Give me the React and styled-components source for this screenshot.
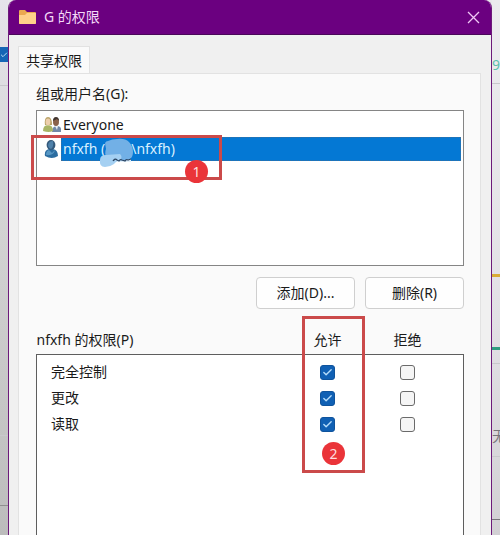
import React, { useState } from "react"
import styled, { createGlobalStyle } from "styled-components"
import { Check } from "lucide-react"

const GlobalStyle = createGlobalStyle`
  *, *::before, *::after {
    box-sizing: border-box;
  }
  body {
    margin: 0;
    overflow: hidden;
    background: #e9e8ec;
    color: #1a1a1a;
    font-family: "Noto Sans", "Noto Sans CJK SC", sans-serif;
    font-size: 14px;
    line-height: 20px;
  }
`

const Desktop = styled.div`
  display: grid;
  grid-template-columns: 8px minmax(0, 1fr) 8px;
  height: 100vh;
`

const Strip = styled.div`
  display: flex;
  flex-direction: column;
  overflow: hidden;
  white-space: nowrap;
  background: ${props => props.$background};
`

const Gap = styled.div`
  flex: 0 0 ${props => props.$size}px;
`

const Rule = styled.div`
  flex: 0 0 ${props => props.$weight || 1}px;
  background: ${props => props.$color || "#c9c8cc"};
`

const StripText = styled.span`
  flex: 0 0 20px;
  display: flex;
  color: ${props => props.$color};
`

const StripTick = styled.div`
  flex: 0 0 15px;
  display: flex;
  justify-content: flex-end;
  align-items: center;
  color: #b9dcf5;
  background: #1565b5;
`

const Window = styled.main`
  display: flex;
  flex-direction: column;
  min-width: 0;
  overflow: hidden;
  border: 1px solid #6d1a7a;
  border-top: none;
  border-bottom: none;
  border-radius: 8px 8px 0 0;
  background: #f0f0f0;
`

const TitleBar = styled.header`
  display: flex;
  flex: 0 0 35px;
  align-items: center;
  gap: 8px;
  padding: 0 11px 0 10px;
  color: #f3d9f7;
  background: #6b0080;
  border-bottom: 1px solid #4a0759;
`

const Title = styled.h1`
  flex: 1;
  margin: 0;
  font-size: 14px;
  font-weight: 400;
  line-height: 20px;
`

const CloseButton = styled.button`
  display: flex;
  padding: 0;
  border: none;
  color: #f0c8f5;
  background: none;
`

const Body = styled.div`
  display: flex;
  flex: 1;
  flex-direction: column;
  padding: 11px 10px 0 9px;
`

const Tabs = styled.div`
  display: flex;
`

const Tab = styled.button`
  height: 28px;
  margin-bottom: -1px;
  padding: 0 7px;
  border: 1px solid #e2e2e2;
  border-bottom: none;
  color: inherit;
  background: #fafafa;
  font: inherit;
`

const Panel = styled.section`
  flex: 1;
  padding: 10px 16px 0 17px;
  border: 1px solid #e2e2e2;
  border-bottom: none;
  background: #fafafa;
`

const ListLabel = styled.div`
  margin-bottom: 6px;
`

const ListArea = styled.div`
  position: relative;
`

const UserList = styled.ul`
  height: 156px;
  margin: 0;
  padding: 2px;
  border: 1px solid #858585;
  background: #fff;
  list-style: none;
`

const UserItem = styled.li`
  display: flex;
  height: 24px;
  padding-left: 4px;
`

const UserIcon = styled.span`
  display: flex;
  flex: 0 0 18px;
  align-items: center;
`

const UserName = styled.span`
  display: flex;
  flex: 1;
  align-items: center;
  padding-left: 2px;
  color: ${props => (props.$selected ? "#d9f1ff" : "inherit")};
  background: ${props => (props.$selected ? "#0478d4" : "none")};
  outline: ${props => (props.$selected ? "1px dotted #3b6f9c" : "none")};
  outline-offset: -1px;
`

const Masked = styled.span`
  position: relative;
  width: 26px;
  height: 24px;
`

const Smear = styled.svg`
  position: absolute;
  top: 1px;
  left: -6px;
`

const Buttons = styled.div`
  display: flex;
  justify-content: flex-end;
  gap: 10px;
  margin: 11px 0 17px;
`

const Button = styled.button`
  width: 99px;
  height: 32px;
  padding: 0;
  border: 1px solid #cfcfcf;
  border-radius: 4px;
  color: inherit;
  background: #fefefe;
  font: inherit;
`

const PermissionArea = styled.div`
  position: relative;
`

const Permissions = styled.table`
  width: 100%;
  table-layout: fixed;
  border-spacing: 0;
  border-collapse: collapse;

  tbody {
    border: 1px solid #5e5e5e;
    background: #fff;
  }
`

const Column = styled.col`
  width: ${props => props.$width || "auto"};
`

const HeadCell = styled.th`
  height: 28px;
  padding: 0;
  font-weight: 400;
  text-align: ${props => props.$align || "center"};
`

const NameCell = styled.th`
  height: 26px;
  padding: 0 0 0 14px;
  font-weight: 400;
  text-align: left;
`

const BoxCell = styled.td`
  height: 26px;
  padding: 0;
`

const SpaceCell = styled.td`
  height: ${props => props.$height}px;
  padding: 0;
`

const TickBox = styled.span`
  display: grid;
  place-items: center;

  > * {
    grid-area: 1 / 1;
  }

  svg {
    color: #b5dcfa;
    pointer-events: none;
  }
`

const Tick = styled.input`
  width: 15px;
  height: 15px;
  margin: 0;
  border: 1px solid #6a6a6a;
  border-radius: 3px;
  background: #f5f5f5;
  appearance: none;

  &:checked {
    border-color: #0f539c;
    background: #1060b4;
  }
`

const Mark = styled.div`
  position: absolute;
  border: 3px solid #cb4a4a;
  pointer-events: none;
`

const UserMark = styled(Mark)`
  top: 25px;
  left: -5px;
  width: 191px;
  height: 45px;
`

const AllowMark = styled(Mark)`
  top: -10px;
  right: 99px;
  width: 63px;
  height: 157px;
`

const Badge = styled.span`
  position: absolute;
  right: ${props => props.$right}px;
  bottom: ${props => props.$bottom}px;
  width: 23px;
  height: 23px;
  border-radius: 50%;
  color: #ffdede;
  background: #ea3439;
  line-height: 23px;
  text-align: center;
`

const FolderIcon = () => (
  <svg width="17" height="14" viewBox="0 0 17 14" aria-hidden="true">
    <path d="M0 1q0-1 1-1h5l2 2h8q1 0 1 1v10q0 1-1 1H1q-1 0-1-1z" fill="#eba950" />
    <path d="M0 5h6l2-2h9v10q0 1-1 1H1q-1 0-1-1z" fill="#ffd18a" />
  </svg>
)

const CloseIcon = () => (
  <svg width="13" height="13" viewBox="0 0 13 13" aria-hidden="true">
    <path d="M1 1l11 11M12 1L1 12" stroke="currentColor" strokeWidth="1.3" />
  </svg>
)

const GroupIcon = () => (
  <svg width="18" height="16" viewBox="0 0 18 16" aria-hidden="true">
    <path d="M9 15q0-6 5-6t4 6z" fill="#7189a8" />
    <path d="M12 9l2 4 1-4z" fill="#e8eef3" />
    <ellipse cx="13" cy="5" rx="3" ry="4" fill="#8a624b" />
    <path d="M10 4q0-4 3-4t3 4l-2-2z" fill="#41352f" />
    <path d="M0 14q0-6 5-6t5 6q-4 2-10 0z" fill="#a9b566" />
    <path d="M2 8q-1-8 3-8t4 8z" fill="#b9a266" />
    <ellipse cx="5" cy="5" rx="2.4" ry="3.4" fill="#edcfac" />
  </svg>
)

const PersonIcon = () => (
  <svg width="16" height="20" viewBox="0 0 16 20" aria-hidden="true">
    <path d="M2 17q-1-6 4-7h4q5 1 5 7-6 4-13 0z" fill="#2c6da0" />
    <path d="M3 16q0-4 3-5l3 3 3-3q-1 6-9 5z" fill="#5797c4" />
    <ellipse cx="8" cy="6" rx="4.4" ry="5" fill="#34597b" />
    <path d="M5 7q0-5 5-5 1 6-2 8-2 0-3-3z" fill="#4f81aa" />
  </svg>
)

// smudge that hides the machine name
const MaskSmear = () => (
  <Smear width="34" height="30" viewBox="0 0 34 30" aria-hidden="true">
    <path d="M13 21h19v3H13z" fill="#e3f0fa" />
    <path
      d="M6 5q1-2 3-2 4-2 9-2 8-1 12 3 4 4 4 10 0 5-3 7-5 3-13 1L8 19Q5 16 7 11z"
      fill="#72b0e6"
    />
    <path d="M1 22q0-5 6-5l14-1q3 3 0 6-4 1-6 4-4 3-9 3-6 0-5-7z" fill="#a5d0f2" />
    <path
      d="M14 23q2-3 4-1l2 1q1-2 3-1l3 1q1-2 3-1l3-1"
      fill="none"
      stroke="#2b4665"
      strokeWidth="1.3"
    />
  </Smear>
)

const TickField = ({ label, initial }) => {
  const [checked, setChecked] = useState(initial)
  return (
    <TickBox>
      <Tick
        type="checkbox"
        aria-label={label}
        checked={checked}
        onChange={e => setChecked(e.target.checked)}
      />
      {checked && <Check size={11} strokeWidth={3} />}
    </TickBox>
  )
}

const permissions = ["完全控制", "更改", "读取"]

const App = () => (
  <>
    <GlobalStyle />
    <Desktop>
      <Strip $background="linear-gradient(#e6e4ea, #d4d4d4 40%, #bcbcbc)">
        <Gap $size={47} />
        <StripTick>
          <Check size={8} strokeWidth={3} />
        </StripTick>
        <Gap $size={23} />
        <Rule />
        <Gap $size={349} />
        <Rule />
        <Gap $size={69} />
        <Rule $color="#8f8f8f" />
      </Strip>
      <Window>
        <TitleBar>
          <FolderIcon />
          <Title>G 的权限</Title>
          <CloseButton aria-label="关闭">
            <CloseIcon />
          </CloseButton>
        </TitleBar>
        <Body>
          <Tabs role="tablist">
            <Tab role="tab" aria-selected="true">
              共享权限
            </Tab>
          </Tabs>
          <Panel>
            <ListLabel id="users">组或用户名(G):</ListLabel>
            <ListArea>
              <UserList role="listbox" aria-labelledby="users">
                <UserItem role="option" aria-selected="false">
                  <UserIcon>
                    <GroupIcon />
                  </UserIcon>
                  <UserName>Everyone</UserName>
                </UserItem>
                <UserItem role="option" aria-selected="true">
                  <UserIcon>
                    <PersonIcon />
                  </UserIcon>
                  <UserName $selected>
                    <span>nfxfh (</span>
                    <Masked>
                      <MaskSmear />
                    </Masked>
                    <span>\nfxfh)</span>
                  </UserName>
                </UserItem>
              </UserList>
              <UserMark>
                <Badge $right={11} $bottom={-6}>
                  1
                </Badge>
              </UserMark>
            </ListArea>
            <Buttons>
              <Button>添加(D)...</Button>
              <Button>删除(R)</Button>
            </Buttons>
            <PermissionArea>
              <Permissions>
                <colgroup>
                  <Column />
                  <Column $width="80px" />
                  <Column $width="80px" />
                  <Column $width="16px" />
                </colgroup>
                <thead>
                  <tr>
                    <HeadCell scope="col" $align="left">
                      nfxfh 的权限(P)
                    </HeadCell>
                    <HeadCell scope="col">允许</HeadCell>
                    <HeadCell scope="col">拒绝</HeadCell>
                    <SpaceCell />
                  </tr>
                </thead>
                <tbody>
                  <tr>
                    <SpaceCell colSpan={4} $height={5} />
                  </tr>
                  {permissions.map(name => (
                    <tr key={name}>
                      <NameCell scope="row">{name}</NameCell>
                      <BoxCell>
                        <TickField label={`${name} 允许`} initial={true} />
                      </BoxCell>
                      <BoxCell>
                        <TickField label={`${name} 拒绝`} initial={false} />
                      </BoxCell>
                      <BoxCell />
                    </tr>
                  ))}
                  <tr>
                    <SpaceCell colSpan={4} $height={120} />
                  </tr>
                </tbody>
              </Permissions>
              <AllowMark>
                <Badge $right={17} $bottom={5}>
                  2
                </Badge>
              </AllowMark>
            </PermissionArea>
          </Panel>
        </Body>
      </Window>
      <Strip $background="linear-gradient(#ececee, #e2e0e5 60%, #d2d0d4)">
        <Gap $size={55} />
        <StripText $color="#5dbfae">9%</StripText>
        <Gap $size={8} />
        <Rule />
        <Gap $size={190} />
        <Rule $weight={3} $color="#d9ac35" />
        <Gap $size={70} />
        <Rule $weight={3} $color="#2f9d80" />
        <Gap $size={13} />
        <Rule />
        <Gap $size={62} />
        <StripText $color="#77757a">无</StripText>
        <Gap $size={10} />
        <Rule />
        <Gap $size={62} />
        <Rule $color="#77757a" />
      </Strip>
    </Desktop>
  </>
)

export default App
